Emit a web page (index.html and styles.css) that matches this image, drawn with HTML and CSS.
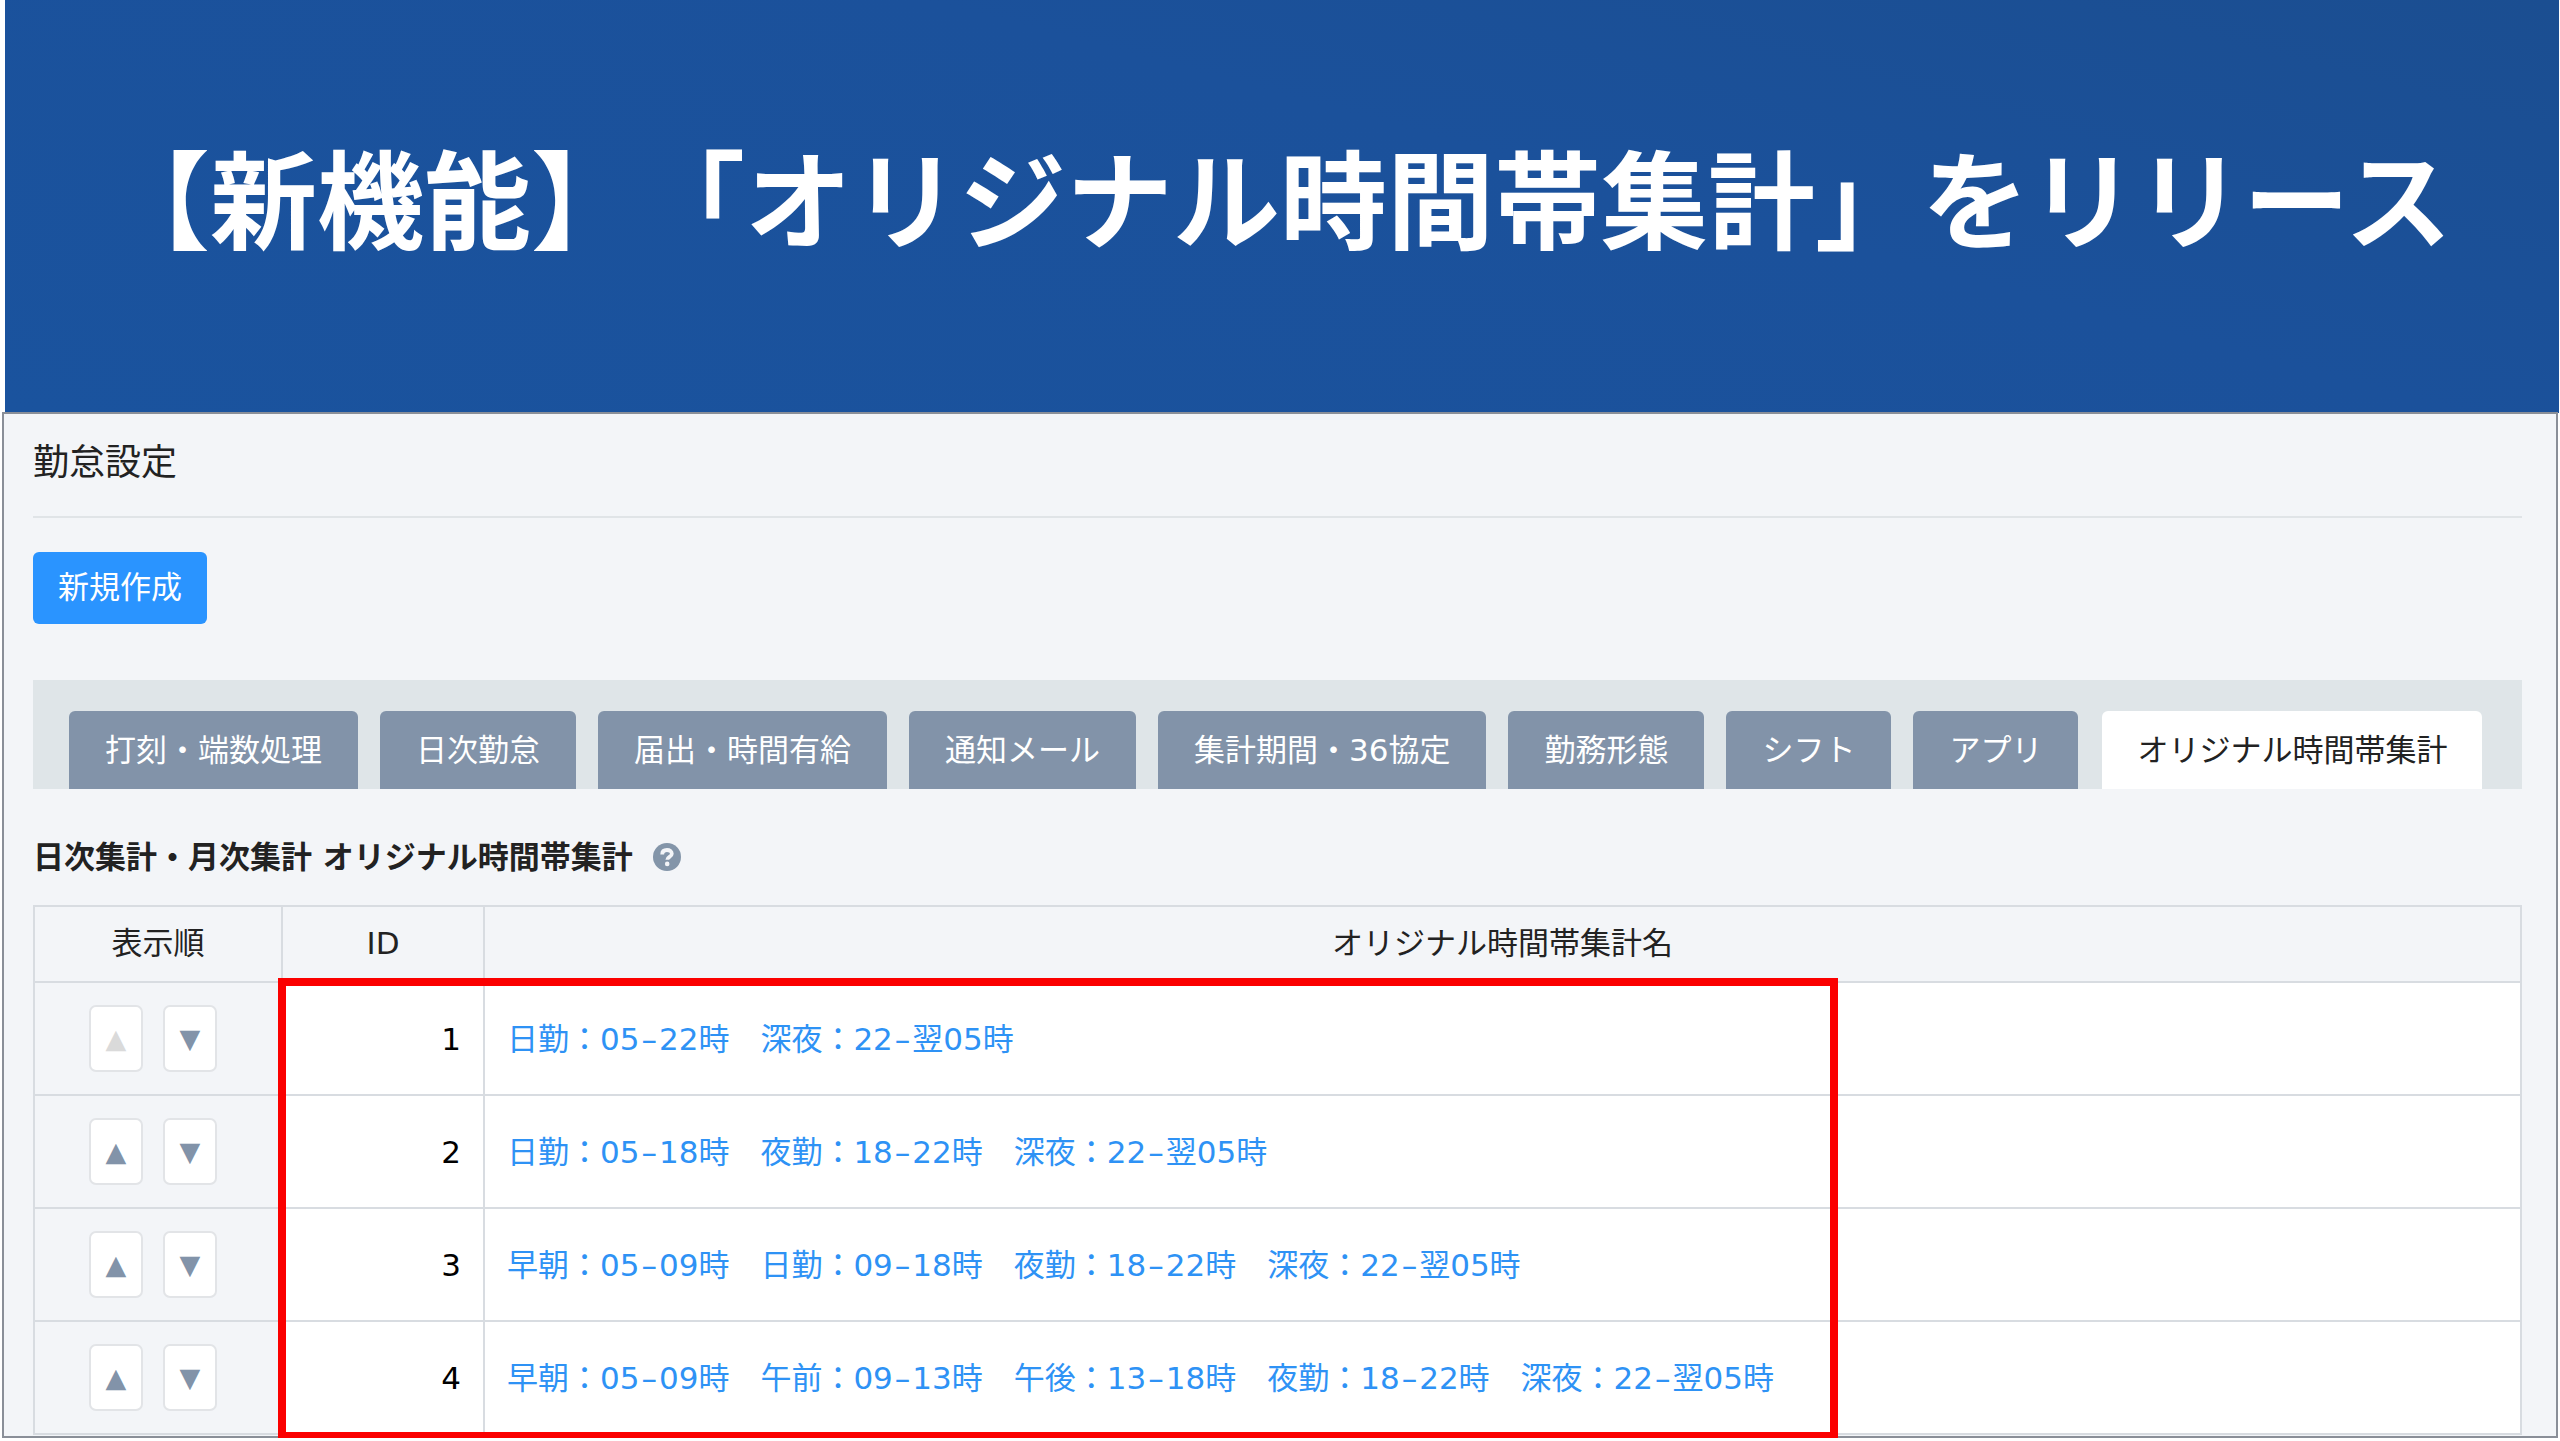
FILE: index.html
```html
<!DOCTYPE html>
<html lang="ja">
<head>
<meta charset="utf-8">
<meta name="viewport" content="width=device-width, initial-scale=1">
<title>【新機能】「オリジナル時間帯集計」をリリース</title>
<link rel="stylesheet" href="styles.css">
</head>
<body>
<header class="banner">
  <h1 class="banner-title">【新機能】「オリジナル時間帯集計」をリリース</h1>
</header>
<main class="panel">
  <h2 class="page-title">勤怠設定</h2>
  <button class="create-button" type="button">新規作成</button>
  <nav class="tabs">
    <a class="tab" href="#stamp">打刻・端数処理</a>
    <a class="tab" href="#daily">日次勤怠</a>
    <a class="tab" href="#request">届出・時間有給</a>
    <a class="tab" href="#mail">通知メール</a>
    <a class="tab" href="#period">集計期間・36協定</a>
    <a class="tab" href="#workstyle">勤務形態</a>
    <a class="tab" href="#shift">シフト</a>
    <a class="tab" href="#app">アプリ</a>
    <a class="tab tab-active" href="#original" aria-current="page">オリジナル時間帯集計</a>
  </nav>
  <div class="section-head">
    <h3 class="section-title">日次集計・月次集計 オリジナル時間帯集計</h3>
    <svg class="help-icon" viewBox="0 0 28 28" aria-hidden="true">
      <circle cx="14" cy="14" r="14" fill="#8395a9"/>
      <path d="M9.2 11.4C9.2 8.4 11.2 7 14 7s4.8 1.5 4.8 3.8c0 3.1-4.5 3-4.5 5.9" fill="none" stroke="#f3f5f8" stroke-width="3.8"/>
      <circle cx="14.2" cy="20.9" r="2.3" fill="#f3f5f8"/>
    </svg>
  </div>
  <div class="table-wrap">
    <table class="totals">
      <colgroup><col class="col-order"><col class="col-id"><col></colgroup>
      <thead>
        <tr><th scope="col">表示順</th><th scope="col">ID</th><th scope="col">オリジナル時間帯集計名</th></tr>
      </thead>
      <tbody>
        <tr>
          <td class="order"><div class="movers"><button class="move" type="button" disabled>▲</button><button class="move" type="button">▼</button></div></td>
          <td class="id">1</td>
          <td><a class="name" href="#1">日勤：05<span class="dash">–</span>22時　深夜：22<span class="dash">–</span>翌05時</a></td>
        </tr>
        <tr>
          <td class="order"><div class="movers"><button class="move" type="button">▲</button><button class="move" type="button">▼</button></div></td>
          <td class="id">2</td>
          <td><a class="name" href="#2">日勤：05<span class="dash">–</span>18時　夜勤：18<span class="dash">–</span>22時　深夜：22<span class="dash">–</span>翌05時</a></td>
        </tr>
        <tr>
          <td class="order"><div class="movers"><button class="move" type="button">▲</button><button class="move" type="button">▼</button></div></td>
          <td class="id">3</td>
          <td><a class="name" href="#3">早朝：05<span class="dash">–</span>09時　日勤：09<span class="dash">–</span>18時　夜勤：18<span class="dash">–</span>22時　深夜：22<span class="dash">–</span>翌05時</a></td>
        </tr>
        <tr>
          <td class="order"><div class="movers"><button class="move" type="button">▲</button><button class="move" type="button">▼</button></div></td>
          <td class="id">4</td>
          <td><a class="name" href="#4">早朝：05<span class="dash">–</span>09時　午前：09<span class="dash">–</span>13時　午後：13<span class="dash">–</span>18時　夜勤：18<span class="dash">–</span>22時　深夜：22<span class="dash">–</span>翌05時</a></td>
        </tr>
      </tbody>
    </table>
    <div class="highlight"></div>
  </div>
</main>
</body>
</html>
```
FILE: styles.css
```css
* {
  box-sizing: border-box;
}

body {
  margin: 0;
  background: #fff;
  color: #222;
  font: 31px/40px "DejaVu Sans", "Noto Sans CJK JP", sans-serif;
  text-spacing-trim: space-all;
}

h1,
h2,
h3 {
  margin: 0;
}

button {
  font: inherit;
  cursor: pointer;
}

/* Announcement banner */
.banner {
  margin: 0 1px 0 5px;
  padding: 115px 0 138px 98px;
  background: linear-gradient(195deg, #1b4e91, #1b519b 40%, #1a539e);
}

.banner-title {
  color: #fff;
  font: bold 107px/160px "Noto Sans CJK JP", sans-serif;
  white-space: nowrap;
}

/* Settings panel */
.panel {
  margin: -1px 2px 0;
  padding: 0 34px 1px 29px;
  border: 2px solid #8a8f98;
  background: #f3f5f8;
}

.page-title {
  padding: 28px 0 32px;
  border-bottom: 2px solid #e0e4e7;
  font-size: 36px;
  font-weight: normal;
  line-height: 42px;
}

.create-button {
  display: block;
  margin: 34px 0 56px;
  padding: 15px 25px 17px;
  border: 0;
  border-radius: 6px;
  background: #2a94ff;
  color: #fff;
}

.tabs {
  display: flex;
  gap: 22px;
  padding: 31px 36px 0;
  background: #dfe5e8;
}

.tab {
  padding: 19px 36px;
  border-radius: 6px 6px 0 0;
  background: #8293a9;
  color: #fff;
  text-decoration: none;
  white-space: nowrap;
}

.tab-active {
  margin-left: 2px;
  padding: 19px 35px;
  background: #fff;
  color: #222;
}

.section-head {
  display: flex;
  align-items: center;
  gap: 20px;
  padding: 48px 0 28px;
}

.section-title {
  font-size: 31px;
  font-weight: bold;
}

.help-icon {
  width: 28px;
  height: 28px;
}

/* Totals table */
.table-wrap {
  position: relative;
}

.totals {
  width: 100%;
  border-collapse: collapse;
  table-layout: fixed;
}

.col-order {
  width: 248px;
}

.col-id {
  width: 202px;
}

.totals th,
.totals td {
  padding: 0 22px;
  border: 2px solid #d8dce1;
  font-weight: normal;
}

.totals th {
  height: 76px;
  padding-bottom: 2px;
}

.totals td {
  height: 113px;
  background: #fff;
}

.totals .order {
  background: #f3f5f8;
}

.totals .id {
  color: #000;
  text-align: right;
}

.movers {
  display: flex;
  gap: 20px;
  padding-left: 32px;
}

.move {
  width: 54px;
  height: 67px;
  padding: 0;
  border: 2px solid #e2e4e7;
  border-radius: 7px;
  background: #fff;
  color: #8293a9;
  font-size: 27px;
}

.move:disabled {
  color: #dadada;
}

.name {
  color: #2e92f5;
  text-decoration: none;
}

.dash {
  padding: 0 2px;
}

.highlight {
  position: absolute;
  top: 73px;
  bottom: -5px;
  left: 245px;
  width: 1560px;
  border: 8px solid #fb0000;
  pointer-events: none;
}
```
